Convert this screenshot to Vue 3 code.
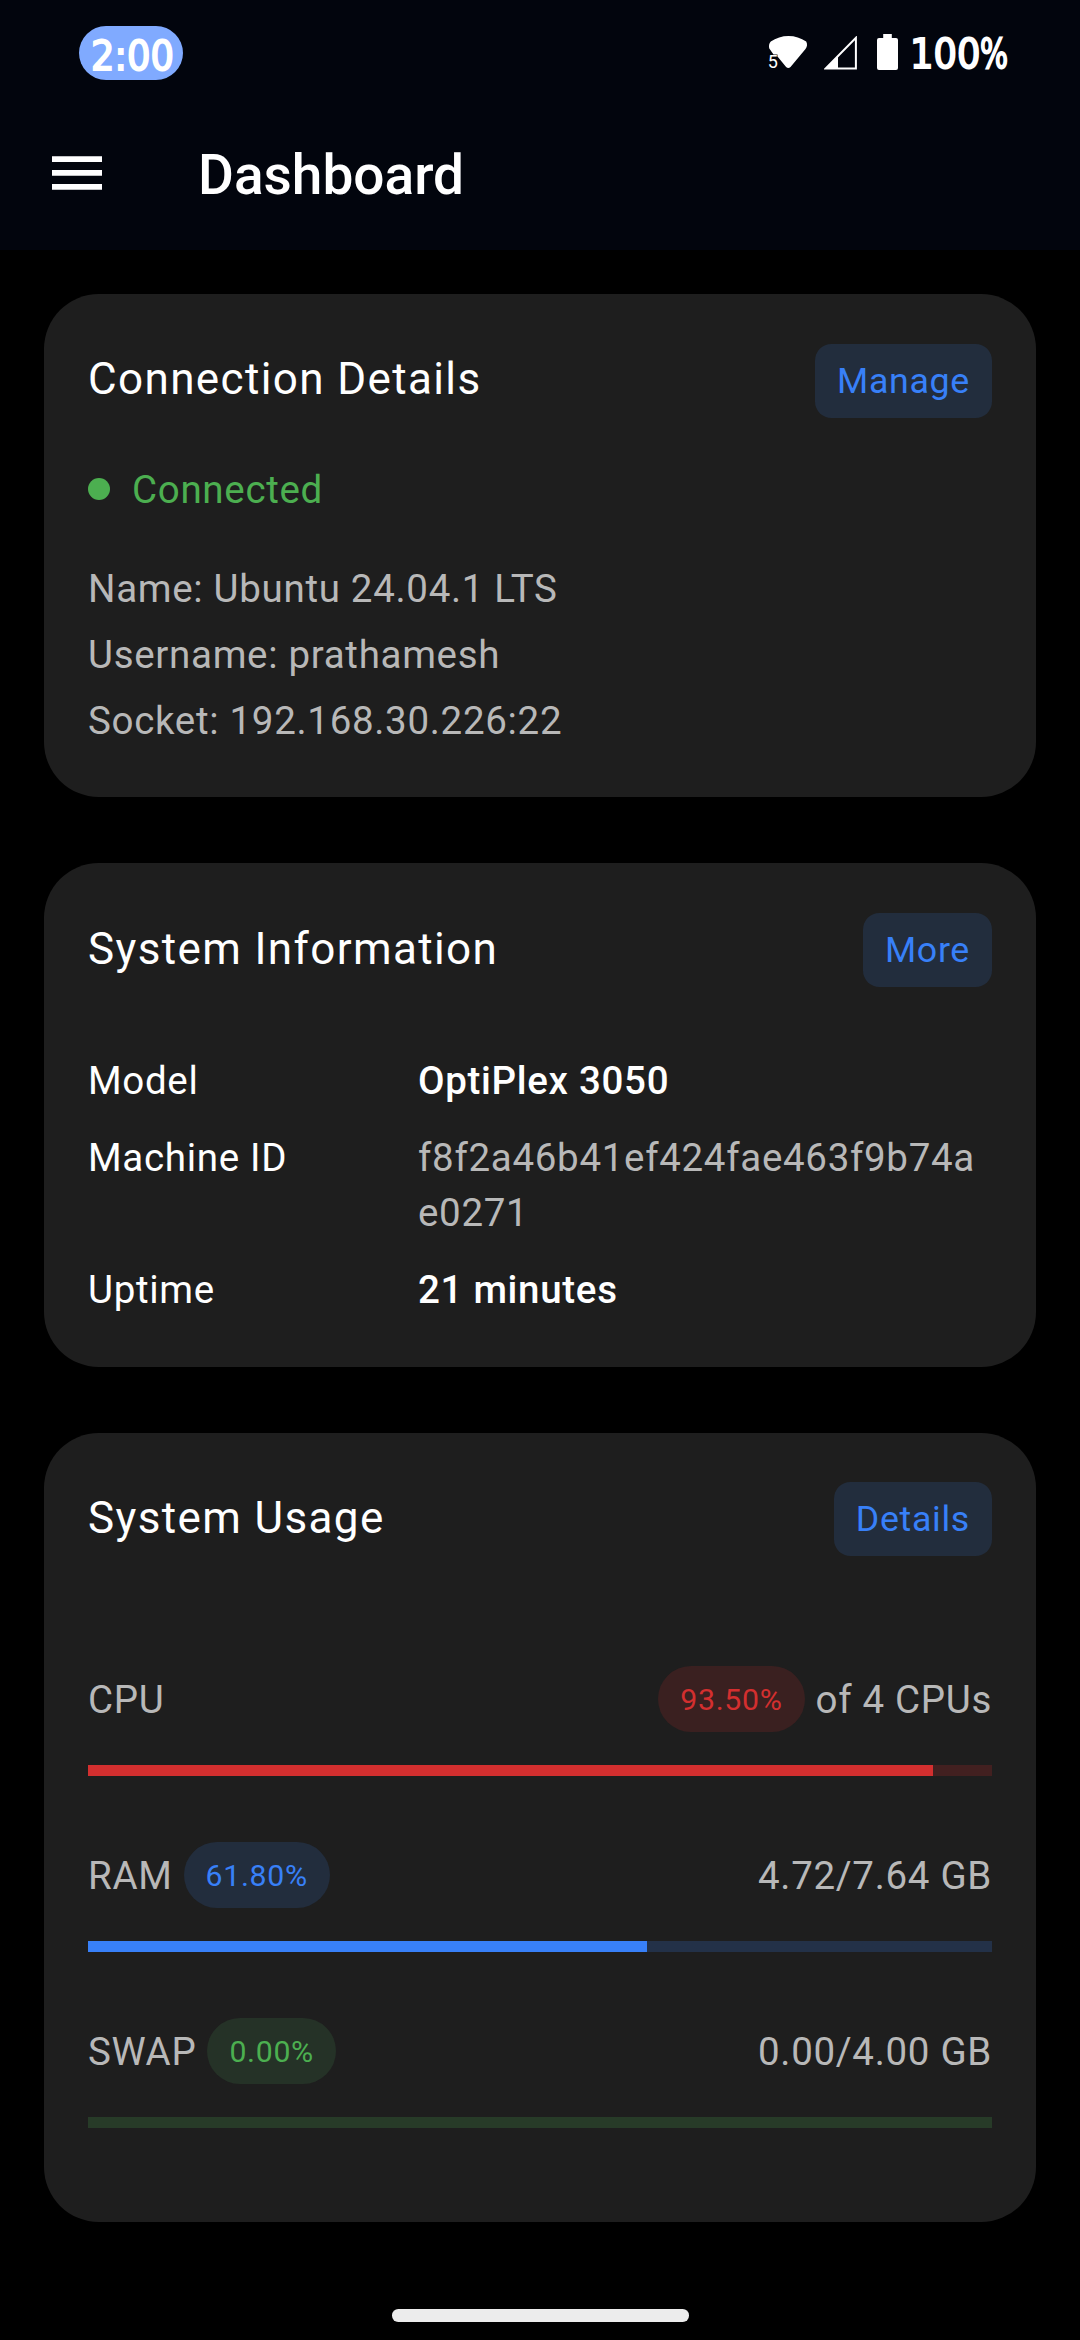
<script setup>
const connection = [
  'Name: Ubuntu 24.04.1 LTS',
  'Username: prathamesh',
  'Socket: 192.168.30.226:22',
]
const info = [
  { label: 'Model', value: 'OptiPlex 3050', strong: true },
  { label: 'Machine ID', value: 'f8f2a46b41ef424fae463f9b74ae0271', strong: false },
  { label: 'Uptime', value: '21 minutes', strong: true },
]
const usage = [
  { name: 'CPU', percent: 93.5, detail: 'of 4 CPUs', tone: 'red', badgeRight: true },
  { name: 'RAM', percent: 61.8, detail: '4.72/7.64 GB', tone: 'blue', badgeRight: false },
  { name: 'SWAP', percent: 0, detail: '0.00/4.00 GB', tone: 'green', badgeRight: false },
]
</script>

<template>
  <div class="screen">
    <header class="top">
      <div class="status">
        <span class="clock">2:00</span>
        <div class="indicators">
          <svg class="wifi" width="40" height="34" viewBox="0 0 40 34">
            <path d="M2.8 6.5C13 -1 28 -1 38.200 6.500C39.600 9 39.200 12 37.500 14L22.500 32Q20.300 34 18.100 32L9.500 21.500V19.500H5.500L1.300 13.500C0.600 11 1 8.500 2.800 6.500Z" fill="#fff" />
            <text x="-0.3" y="33" class="band">5</text>
          </svg>
          <svg class="signal" width="33" height="34" viewBox="0 0 33 34">
            <path d="M31.900 1.800V32.500H1.700Z" fill="none" stroke="#fff" stroke-width="2" />
            <path d="M1 33L14 20V33Z" fill="#fff" />
          </svg>
          <svg class="battery" width="21" height="36" viewBox="0 0 21 36">
            <path d="M6.200 0H14.800V4H19Q21 4 21 6V34Q21 36 19 36H2Q0 36 0 34V6Q0 4 2 4H6.200Z" fill="#fff" />
          </svg>
          <span class="charge">100<i>%</i></span>
        </div>
      </div>
      <div class="appbar">
        <svg width="50" height="34" viewBox="0 0 50 34">
          <path d="M0 .3H50V6H0ZM0 14H50V19.800H0ZM0 28H50V33.700H0Z" fill="#fff" />
        </svg>
        <h1>Dashboard</h1>
      </div>
    </header>

    <main>
      <section class="card connection">
        <div class="head">
          <h2>Connection Details</h2>
          <button>Manage</button>
        </div>
        <div class="state"><i></i><span>Connected</span></div>
        <p v-for="line in connection" :key="line" class="line">{{ line }}</p>
      </section>

      <section class="card">
        <div class="head">
          <h2>System Information</h2>
          <button>More</button>
        </div>
        <dl>
          <template v-for="row in info" :key="row.label">
            <dt>{{ row.label }}</dt>
            <dd :class="{ strong: row.strong }">{{ row.value }}</dd>
          </template>
        </dl>
      </section>

      <section class="card usage">
        <div class="head">
          <h2>System Usage</h2>
          <button>Details</button>
        </div>
        <div v-for="u in usage" :key="u.name" class="meter" :class="u.tone">
          <div class="meter-row">
            <span class="group">
              {{ u.name }}
              <b v-if="!u.badgeRight" class="badge">{{ u.percent.toFixed(2) }}%</b>
            </span>
            <span class="group">
              <b v-if="u.badgeRight" class="badge">{{ u.percent.toFixed(2) }}%</b>
              {{ u.detail }}
            </span>
          </div>
          <div class="track"><div class="fill" :style="{ width: u.percent + '%' }"></div></div>
        </div>
      </section>
    </main>

    <footer><div class="handle"></div></footer>
  </div>
</template>

<style>
body {
  background: #000;
}
</style>

<style scoped>
.screen {
  width: 1080px;
  height: 2340px;
  display: flex;
  flex-direction: column;
  background: #000;
  color: #fff;
  font-family: Roboto, "Liberation Sans", sans-serif;
  font-size: 38.5px;
  letter-spacing: 0.6875px;
  overflow: hidden;
}
h1, h2, p, dl, dt, dd {
  margin: 0;
  font-weight: 400;
}
.top {
  height: 250px;
  background: #02050d;
}
.status {
  height: 96px;
  padding: 0 73px 0 79px;
  box-sizing: border-box;
  display: flex;
  justify-content: space-between;
  align-items: flex-start;
}
.clock,
.charge {
  font-family: "DejaVu Sans Condensed", "DejaVu Sans", sans-serif;
  font-stretch: condensed;
  font-size: 41px;
  letter-spacing: 0;
  -webkit-text-stroke: 1.8px #fff;
  white-space: nowrap;
}
.clock {
  width: 104px;
  height: 54px;
  box-sizing: border-box;
  margin-top: 26px;
  padding-left: 3px;
  border-radius: 27px;
  background: #80aaff;
  line-height: 61px;
  text-align: center;
}
.indicators {
  display: flex;
  align-items: flex-start;
}
.wifi {
  margin: 35px 16px 0 0;
  overflow: visible;
}
.band {
  font: 18px Roboto, sans-serif;
  letter-spacing: 0;
  fill: #fff;
}
.signal {
  margin: 36px 20px 0 0;
}
.battery {
  margin: 34px 12px 0 0;
}
.charge {
  width: 97px;
  line-height: 56px;
  margin-top: 26px;
}
.charge i {
  display: inline-block;
  font-style: normal;
  transform: scaleX(0.8);
  transform-origin: left;
}
.appbar {
  display: flex;
  padding: 60px 0 0 52px;
}
.appbar h1 {
  margin: -19px 0 0 96px;
  font-size: 55px;
  font-weight: 500;
  line-height: 76px;
  letter-spacing: 0;
}
main {
  padding: 44px 44px 0;
  display: flex;
  flex-direction: column;
  gap: 66px;
}
.card {
  height: 503.300px;
  box-sizing: border-box;
  padding: 49.500px 44px 0;
  border-radius: 55px;
  background: #1e1e1e;
}
.head {
  height: 74px;
  display: flex;
  justify-content: space-between;
  align-items: flex-start;
}
h2 {
  font-size: 44px;
  line-height: 72px;
  letter-spacing: 1.375px;
}
.connection h2 {
  line-height: 71px;
}
button {
  height: 74px;
  padding: 0 22px;
  border: 0;
  border-radius: 16.500px;
  background: #222d3d;
  color: #3880f8;
  font: inherit;
  font-size: 35.750px;
  line-height: 74px;
  letter-spacing: 0.6875px;
}
.state {
  height: 44px;
  margin: 49.500px 0 44.500px;
  display: flex;
  align-items: center;
  gap: 22px;
  color: #4caf50;
}
.state i {
  width: 22px;
  height: 22px;
  border-radius: 50%;
  background: #4caf50;
}
.line {
  line-height: 66px;
  color: #b8b8b8;
}
dl {
  margin-top: 66.500px;
  display: grid;
  grid-template-columns: 330px 1fr;
  row-gap: 22px;
  line-height: 55px;
}
dd {
  color: #b8b8b8;
  word-break: break-all;
}
dd.strong {
  color: #fff;
  font-weight: 500;
}
.usage {
  height: 789px;
}
.usage .head {
  margin-bottom: 110px;
}
.meter {
  margin-bottom: 66px;
}
.meter-row {
  height: 66px;
  display: flex;
  justify-content: space-between;
  color: #b8b8b8;
}
.group {
  display: flex;
  align-items: flex-start;
  gap: 11px;
  line-height: 68px;
}
.badge {
  height: 66px;
  padding: 0 22px;
  border-radius: 33px;
  font-weight: 400;
  font-size: 30.250px;
}
.track {
  height: 11px;
  margin-top: 33px;
}
.fill {
  height: 11px;
}
.red .badge { background: #3a2020; color: #d32f2f; }
.red .track { background: #422020; }
.red .fill { background: #d32f2f; }
.blue .badge { background: #222d3d; color: #3880f8; }
.blue .track { background: #233148; }
.blue .fill { background: #3880f8; }
.green .badge { background: #253227; color: #4caf50; }
.green .track { background: #273b28; }
.green .fill { background: #4caf50; }
footer {
  margin-top: auto;
  height: 31px;
  display: flex;
  justify-content: center;
}
.handle {
  width: 297px;
  height: 12.500px;
  border-radius: 6.250px;
  background: #ececec;
}
</style>
